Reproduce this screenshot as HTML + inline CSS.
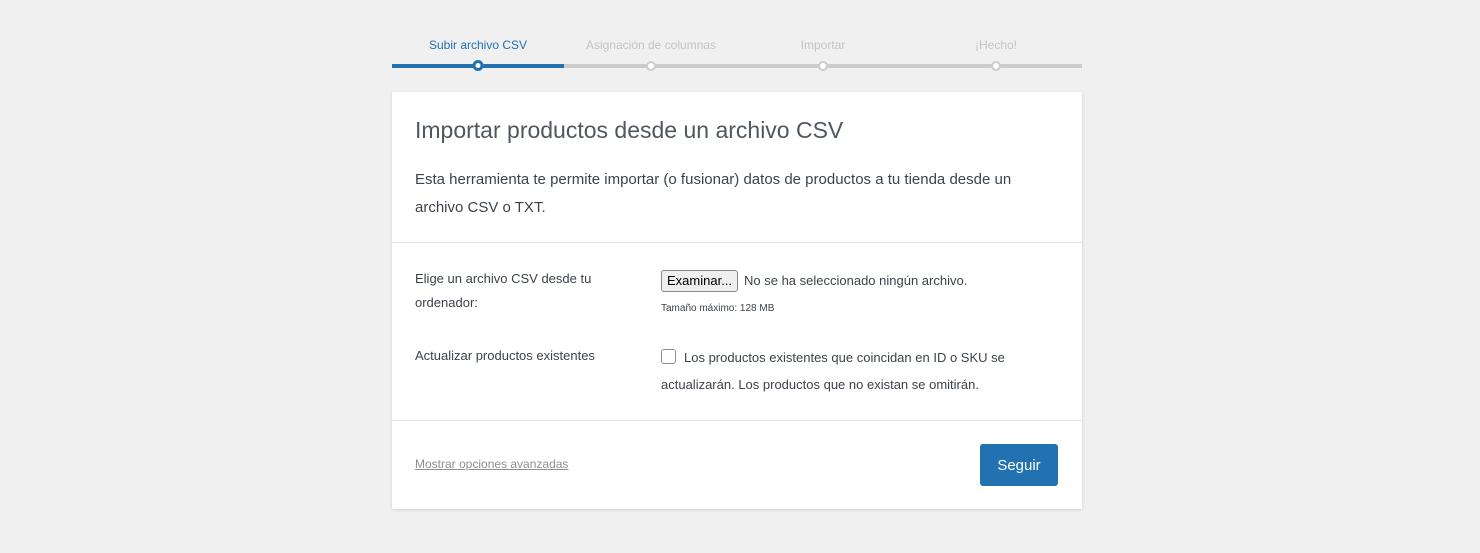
<!DOCTYPE html>
<html><head><style>
body{margin:0;background:#f0f0f1;font-family:"Liberation Sans",sans-serif;width:1480px;height:553px;overflow:hidden;position:relative;color:#3c434a}
.abs{position:absolute}
.lbl{position:absolute;top:38px;font-size:12px;color:#c3c4c7;transform:translateX(-50%);white-space:nowrap}
.dot{position:absolute;top:61px;width:6px;height:6px;border-radius:50%;background:#fff;border:2px solid #ccc;transform:translateX(-50%)}
.card{position:absolute;left:392px;top:92px;width:690px;height:417px;background:#fff;box-shadow:0 1px 3px rgba(0,0,0,.13)}
</style></head><body>
<div class="abs" style="left:392px;top:64px;width:690px;height:4px;background:#ccc"></div>
<div class="abs" style="left:392px;top:64px;width:172px;height:4px;background:#2271b1"></div>
<div class="lbl" style="left:478px;color:#2271b1">Subir archivo CSV</div>
<div class="lbl" style="left:651px">Asignación de columnas</div>
<div class="lbl" style="left:823px">Importar</div>
<div class="lbl" style="left:996px">¡Hecho!</div>
<div class="dot" style="left:478px;border-color:#2271b1;border-width:3px;width:5px;height:5px;top:60px"></div>
<div class="dot" style="left:651px"></div>
<div class="dot" style="left:823px"></div>
<div class="dot" style="left:996px"></div>
<div class="card">
 <div class="abs" style="left:23px;top:25px;font-size:23px;color:#50575e">Importar productos desde un archivo CSV</div>
 <div class="abs" style="left:23px;top:74px;width:640px;font-size:15px;line-height:28px">Esta herramienta te permite importar (o fusionar) datos de productos a tu tienda desde un archivo CSV o TXT.</div>
 <div class="abs" style="left:0;top:150px;width:690px;height:1px;background:#e5e5e5"></div>
 <div class="abs" style="left:23px;top:175px;width:200px;font-size:13px;line-height:24px">Elige un archivo CSV desde tu ordenador:</div>
 <div class="abs" style="left:269px;top:178px;height:20px;padding:0 5px;border:1px solid #888;border-radius:3px;background:#efefef;font-size:13px;line-height:20px;color:#000">Examinar...</div>
 <div class="abs" style="left:352px;top:181px;font-size:13px;color:#3c434a">No se ha seleccionado ningún archivo.</div>
 <div class="abs" style="left:269px;top:211px;font-size:10px">Tamaño máximo: 128 MB</div>
 <div class="abs" style="left:23px;top:256px;font-size:13px">Actualizar productos existentes</div>
 <div class="abs" style="left:269px;top:257px;width:13px;height:13px;border:1px solid #8c8f94;border-radius:3px"></div>
 <div class="abs" style="left:269px;top:252px;width:380px;font-size:13px;line-height:27px;text-indent:23px">Los productos existentes que coincidan en ID o SKU se actualizarán. Los productos que no existan se omitirán.</div>
 <div class="abs" style="left:0;top:328px;width:690px;height:1px;background:#e5e5e5"></div>
 <div class="abs" style="left:23px;top:365px;font-size:12px;color:#8c8f94;text-decoration:underline">Mostrar opciones avanzadas</div>
 <div class="abs" style="left:588px;top:352px;width:78px;height:42px;background:#2271b1;border-radius:3px;color:#fff;font-size:15px;line-height:44px;text-align:center">Seguir</div>
</div>
</body></html>
